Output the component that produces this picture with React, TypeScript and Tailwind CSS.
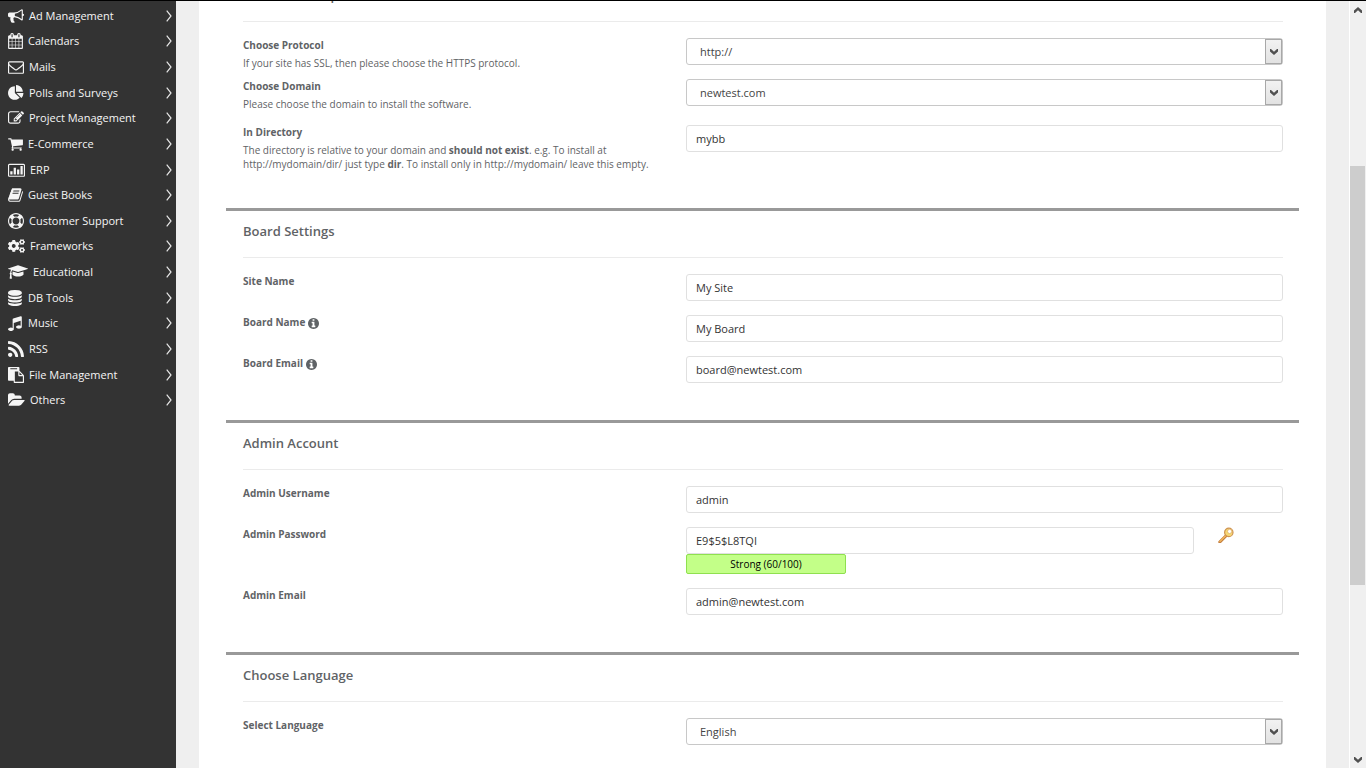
import type { ReactNode } from "react";
import { FaCogs } from "react-icons/fa";

type MenuItem = {
  label: string;
  box: string;
  width: string;
  path?: string;
};

const MENU: MenuItem[] = [
  {
    label: "Ad Management",
    box: "0 0 1792 1792",
    width: "w-4",
    path: "M1664 640q53 0 90.5 37.5t37.5 90.5-37.5 90.5-90.5 37.5v384q0 52-38 90t-90 38q-417-347-812-380-58 19-91 66t-31 100.5 40 92.5q-20 33-23 65.5t6 58 33.5 55 48 50 61.5 50.5q-29 58-111.5 83t-168.5 11.5-132-55.5q-7-23-29.5-87.5t-32-94.5-23-89-15-101 3.5-98.5 22-110.5h-122q-66 0-113-47t-47-113v-192q0-66 47-113t113-47h480q435 0 896-384 52 0 90 38t38 90v384zm-128 604v-954q-394 302-768 343v270q377 42 768 341z",
  },
  {
    label: "Calendars",
    box: "64 0 1664 1792",
    width: "w-[15px]",
    path: "M192 1664h288v-288h-288v288zm352 0h320v-288h-320v288zm-352-352h288v-320h-288v320zm352 0h320v-320h-320v320zm-352-384h288v-288h-288v288zm736 736h320v-288h-320v288zm-384-736h320v-288h-320v288zm768 736h288v-288h-288v288zm-384-352h320v-320h-320v320zm-352-864v-288q0-13-9.5-22.5t-22.5-9.5h-64q-13 0-22.5 9.5t-9.5 22.5v288q0 13 9.5 22.5t22.5 9.5h64q13 0 22.5-9.5t9.5-22.5zm736 864h288v-320h-288v320zm-384-384h320v-288h-320v288zm384 0h288v-288h-288v288zm32-480v-288q0-13-9.5-22.5t-22.5-9.5h-64q-13 0-22.5 9.5t-9.5 22.5v288q0 13 9.5 22.5t22.5 9.5h64q13 0 22.5-9.5t9.5-22.5zm384-64v1280q0 52-38 90t-90 38h-1408q-52 0-90-38t-38-90v-1280q0-52 38-90t90-38h128v-96q0-66 47-113t113-47h64q66 0 113 47t47 113v96h384v-96q0-66 47-113t113-47h64q66 0 113 47t47 113v96h128q52 0 90 38t38 90z",
  },
  {
    label: "Mails",
    box: "0 0 1792 1792",
    width: "w-4",
    path: "M1664 1504v-768q-32 36-69 66-268 206-426 338-51 43-83 67t-86.5 48.5-102.5 24.5h-2q-48 0-102.5-24.5t-86.5-48.5-83-67q-158-132-426-338-37-30-69-66v768q0 13 9.5 22.5t22.5 9.5h1472q13 0 22.5-9.5t9.5-22.5zm0-1051v-24.5l-.5-13-3-12.5-5.5-9-9-7.5-14-2.5h-1472q-13 0-22.5 9.5t-9.5 22.5q0 168 147 284 193 152 401 317 6 5 35 29.5t46 37.5 44.5 31.5 50.5 27.5 43 9h2q20 0 43-9t50.5-27.5 44.5-31.5 46-37.5 35-29.5q208-165 401-317 54-43 100.5-115.5t46.5-131.5zm128-37v1088q0 66-47 113t-113 47h-1472q-66 0-113-47t-47-113v-1088q0-66 47-113t113-47h1472q66 0 113 47t47 113z",
  },
  {
    label: "Polls and Surveys",
    box: "0 0 1792 1792",
    width: "w-4",
    path: "M768 890l546 546q-106 108-247.5 168t-298.5 60q-209 0-385.5-103t-279.5-279.5-103-385.5 103-385.5 279.5-279.5 385.5-103v762zm187 6h773q0 157-60 298.5t-168 247.5zm709-128h-768v-768q209 0 385.5 103t279.5 279.5 103 385.5z",
  },
  {
    label: "Project Management",
    box: "0 0 1792 1792",
    width: "w-4",
    path: "M888 1184l116-116-152-152-116 116v56h96v96h56zm440-720q-16-16-33 1l-350 350q-17 17-1 33t33-1l350-350q17-17 1-33zm80 594v190q0 119-84.5 203.5t-203.5 84.5h-832q-119 0-203.5-84.5t-84.5-203.5v-832q0-119 84.5-203.5t203.5-84.5h832q63 0 117 25 15 7 18 23 3 17-9 29l-49 49q-14 14-32 8-23-6-45-6h-832q-66 0-113 47t-47 113v832q0 66 47 113t113 47h832q66 0 113-47t47-113v-126q0-13 9-22l64-64q15-15 35-7t20 29zm-96-738l288 288-672 672h-288v-288zm444 132l-92 92-288-288 92-92q28-28 68-28t68 28l152 152q28 28 28 68t-28 68z",
  },
  {
    label: "E-Commerce",
    box: "64 0 1664 1792",
    width: "w-[15px]",
    path: "M704 1536q0 52-38 90t-90 38-90-38-38-90 38-90 90-38 90 38 38 90zm896 0q0 52-38 90t-90 38-90-38-38-90 38-90 90-38 90 38 38 90zm128-1088v512q0 24-16.5 42.5t-40.5 21.5l-1044 122q13 60 13 70 0 16-24 64h920q26 0 45 19t19 45-19 45-45 19h-1024q-26 0-45-19t-19-45q0-11 8-31.5t16-36 21.5-40 15.5-29.5l-177-823h-204q-26 0-45-19t-19-45 19-45 45-19h256q16 0 28.5 6.5t19.5 15.5 13 24.5 8 26 5.5 29.5 4.5 26h1201q26 0 45 19t19 45z",
  },
  {
    label: "ERP",
    box: "0 0 1920 1792",
    width: "w-[17px]",
    path: "M160 192h1600q66 0 113 47t47 113v1152q0 66-47 113t-113 47h-1600q-66 0-113-47t-47-113v-1152q0-66 47-113t113-47zm0 128q-32 0-32 32v1152q0 32 32 32h1600q32 0 32-32v-1152q0-32-32-32zM256 1024h256v384h-256zM640 640h256v768h-256zM1024 832h256v576h-256zM1408 448h256v960h-256z",
  },
  {
    label: "Guest Books",
    box: "64 0 1664 1792",
    width: "w-[15px]",
    path: "M1703 478q40 57 18 129l-275 906q-19 64-76.5 107.5t-122.5 43.5h-923q-77 0-148.5-53.5t-99.5-131.5q-24-67-2-127 0-4 3-27t4-37q1-8-3-21.5t-3-19.5q2-11 8-21t16.5-23.5 16.5-23.5q23-38 45-91.5t30-91.5q3-10 .5-30t-.5-28q3-11 17-28t17-23q21-36 42-92t25-90q1-9-2.5-32t.5-28q4-13 22-30.5t22-22.5q19-26 42.5-84.5t27.5-96.5q1-8-3-25.5t-2-26.5q2-8 9-18t18-23 17-21q8-12 16.5-30.5t15-35 16-36 19.5-32 26.5-23.5 36-11.5 47.5 5.5l-1 3q38-9 51-9h761q74 0 114 56t18 130l-274 906q-36 119-71.5 153.5t-128.5 34.5h-869q-27 0-38 15-11 16-1 43 24 70 144 70h923q29 0 56-15.5t35-41.5l300-987q7-22 5-57 38 15 59 43zm-1064 2q-4 13 2 22.5t20 9.5h608q13 0 25.5-9.5t16.5-22.5l21-64q4-13-2-22.5t-20-9.5h-608q-13 0-25.5 9.5t-16.5 22.5zm-83 256q-4 13 2 22.5t20 9.5h608q13 0 25.5-9.5t16.5-22.5l21-64q4-13-2-22.5t-20-9.5h-608q-13 0-25.5 9.5t-16.5 22.5z",
  },
  {
    label: "Customer Support",
    box: "0 0 1792 1792",
    width: "w-4",
    path: "M896 0q182 0 348 71t286 191 191 286 71 348-71 348-191 286-286 191-348 71-348-71-286-191-191-286-71-348 71-348 191-286 286-191 348-71zm0 128q-190 0-361 90l194 194q82-28 167-28t167 28l194-194q-171-90-361-90zm-678 1129l194-194q-28-82-28-167t28-167l-194-194q-90 171-90 361t90 361zm678 407q190 0 361-90l-194-194q-82 28-167 28t-167-28l-194 194q171 90 361 90zm0-384q159 0 271.5-112.5t112.5-271.5-112.5-271.5-271.5-112.5-271.5 112.5-112.5 271.5 112.5 271.5 271.5 112.5zm484-217l194 194q90-171 90-361t-90-361l-194 194q28 82 28 167t-28 167z",
  },
  { label: "Frameworks", box: "", width: "w-[17px]" },
  {
    label: "Educational",
    box: "0 0 2304 1792",
    width: "w-5",
    path: "M1774 836l18 316q4 69-82 128t-235 93.5-323 34.5-323-34.5-235-93.5-82-128l18-316 574 181q22 7 48 7t48-7zm530-324q0 23-22 31l-1120 352q-4 1-10 1t-10-1l-652-206q-43 34-71 111.5t-34 178.5q63 36 63 109 0 69-58 107l58 433q2 14-8 25-9 11-24 11h-192q-15 0-24-11-10-11-8-25l58-433q-58-38-58-107 0-73 65-111 11-207 98-330l-333-104q-22-8-22-31t22-31l1120-352q4-1 10-1t10 1l1120 352q22 8 22 31z",
  },
  {
    label: "DB Tools",
    box: "128 0 1664 1792",
    width: "w-[15px]",
    path: "M896 768q237 0 443-43t325-127v170q0 69-103 128t-280 93.5-385 34.5-385-34.5-280-93.5-103-128v-170q119 84 325 127t443 43zm0 768q237 0 443-43t325-127v170q0 69-103 128t-280 93.5-385 34.5-385-34.5-280-93.5-103-128v-170q119 84 325 127t443 43zm0-384q237 0 443-43t325-127v170q0 69-103 128t-280 93.5-385 34.5-385-34.5-280-93.5-103-128v-170q119 84 325 127t443 43zm0-1152q208 0 385 34.5t280 93.5 103 128v128q0 69-103 128t-280 93.5-385 34.5-385-34.5-280-93.5-103-128v-128q0-69 103-128t280-93.5 385-34.5z",
  },
  {
    label: "Music",
    box: "128 0 1664 1792",
    width: "w-[15px]",
    path: "M1664 224v1120q0 50-34 89t-86 60.5-103.5 32-96.5 10.5-96.5-10.5-103.5-32-86-60.5-34-89 34-89 86-60.5 103.5-32 96.5-10.5q105 0 192 39v-537l-768 237v709q0 50-34 89t-86 60.5-103.5 32-96.5 10.5-96.5-10.5-103.5-32-86-60.5-34-89 34-89 86-60.5 103.5-32 96.5-10.5q105 0 192 39v-967q0-31 19-56.5t49-35.5l832-256q12-4 28-4 40 0 68 28t28 68z",
  },
  {
    label: "RSS",
    box: "192 128 1408 1408",
    width: "w-4",
    path: "M576 1344q0 80-56 136t-136 56-136-56-56-136 56-136 136-56 136 56 56 136zm512 123q2 28-17 48-18 21-47 21h-135q-25 0-43-16.5t-20-41.5q-22-229-184.5-391.5t-391.5-184.5q-25-2-41.5-20t-16.5-43v-135q0-29 21-47 17-17 43-17h5q160 13 306 80.5t259 181.5q114 113 181.5 259t80.5 306zm512 2q2 27-18 47-18 20-46 20h-143q-26 0-44.5-17.5t-19.5-42.5q-12-215-101-408.5t-231.5-336-336-231.5-408.5-102q-25-1-42.5-19.5t-17.5-43.5v-143q0-28 20-46 18-18 44-18h3q262 13 501.5 120t425.5 294q187 186 294 425.5t120 501.5z",
  },
  {
    label: "File Management",
    box: "0 0 1792 1792",
    width: "w-4",
    path: "M768 1664h896v-640h-416q-40 0-68-28t-28-68v-416h-384v1152zm256-1440v-64q0-13-9.5-22.5t-22.5-9.5h-704q-13 0-22.5 9.5t-9.5 22.5v64q0 13 9.5 22.5t22.5 9.5h704q13 0 22.5-9.5t9.5-22.5zm256 672h299l-299-299v299zm512 128v672q0 40-28 68t-68 28h-960q-40 0-68-28t-28-68v-160h-544q-40 0-68-28t-28-68v-1344q0-40 28-68t68-28h1088q40 0 68 28t28 68v328q21 13 36 28l408 408q28 28 48 76t20 88z",
  },
  {
    label: "Others",
    box: "0 0 1920 1792",
    width: "w-[17px]",
    path: "M1879 952q0 31-31 66l-336 396q-43 51-120.5 86.5t-143.5 35.5h-1088q-34 0-60.5-13t-26.5-43q0-31 31-66l336-396q43-51 120.5-86.5t143.5-35.5h1088q34 0 60.5 13t26.5 43zm-343-344v160h-832q-94 0-197 47.5t-164 119.5l-337 396-5 6q0-4-.5-12.5t-.5-12.5v-960q0-92 66-158t158-66h320q92 0 158 66t66 158v32h544q92 0 158 66t66 158z",
  },
];

function InfoIcon() {
  return (
    <svg viewBox="128 128 1536 1536" className="w-[11px] h-[11px] mt-[2px]" fill="currentColor">
      <path d="M1152 1376v-160q0-14-9-23t-23-9h-96v-512q0-14-9-23t-23-9h-320q-14 0-23 9t-9 23v160q0 14 9 23t23 9h96v320h-96q-14 0-23 9t-9 23v160q0 14 9 23t23 9h448q14 0 23-9t9-23zm-128-896v-160q0-14-9-23t-23-9h-192q-14 0-23 9t-9 23v160q0 14 9 23t23 9h192q14 0 23-9t9-23zm640 416q0 209-103 385.5t-279.5 279.5-385.5 103-385.5-103-279.5-279.5-103-385.5 103-385.5 279.5-279.5 385.5-103 385.5 103 279.5 279.5 103 385.5z" />
    </svg>
  );
}

function KeyIcon() {
  return (
    <svg viewBox="0 0 16 16" className="w-4 h-4">
      <path d="M1.8 15 8.8 8" stroke="#c07a3a" strokeWidth="3" strokeLinecap="round" />
      <path d="M2 14.4 8.8 7.6" stroke="#eeb25c" strokeWidth="1.5" strokeLinecap="round" />
      <circle cx="10.8" cy="5.4" r="4.2" fill="#f6d774" stroke="#cf9350" strokeWidth="1.2" />
      <circle cx="11.6" cy="4.4" r="2.1" fill="#fff" stroke="#e0b36a" strokeWidth="0.8" />
    </svg>
  );
}

function ArrowIcon({ up = false }: { up?: boolean }) {
  return (
    <svg viewBox="0 0 8 6" className={up ? "w-2 h-[6px] rotate-180" : "w-2 h-[6px]"}>
      <path d="M0 0H1L4 2.8 7 0H8V2.6L4 6 0 2.6Z" fill="#505050" />
    </svg>
  );
}

function Sidebar() {
  return (
    <aside className="w-44 shrink-0 bg-[#333333] pt-[2px]">
      <nav className="grid h-[410px] auto-rows-fr">
        {MENU.map((item) => (
          <a
            key={item.label}
            href="#"
            className="flex items-center pl-2 pr-1 text-[11px] leading-4 text-[#f5f5f5]"
          >
            {item.path ? (
              <svg viewBox={item.box} className={`${item.width} h-4 shrink-0`} fill="currentColor">
                <path fillRule={item.label === "ERP" ? "evenodd" : "nonzero"} d={item.path} />
              </svg>
            ) : (
              <FaCogs className={`${item.width} h-4 shrink-0`} />
            )}
            <span className="ml-[5px] flex-1">{item.label}</span>
            <svg viewBox="0 0 6 12" className="w-[6px] h-3" fill="none">
              <path d="M0.7 0.7 5 6 0.7 11.3" stroke="#e6e6e6" strokeWidth="1.2" />
            </svg>
          </a>
        ))}
      </nav>
    </aside>
  );
}

function Section({ title, children }: { title: string; children: ReactNode }) {
  return (
    <section className="border-t-[3px] border-[#999999] pb-[37px]">
      <div className="pl-[17px] pr-4">
        <h2 className="h-[47px] border-b border-[#ebebeb] pt-[11px] text-[13px] leading-[18px] font-semibold text-[#5f6366]">
          {title}
        </h2>
        <div className="pt-4">{children}</div>
      </div>
    </section>
  );
}

function Row({
  id,
  label,
  info = false,
  note,
  gap = "mb-[14px]",
  children,
}: {
  id: string;
  label: string;
  info?: boolean;
  note?: ReactNode;
  gap?: string;
  children: ReactNode;
}) {
  return (
    <div className={`grid grid-cols-[443fr_597fr] items-start last:mb-0 ${gap}`}>
      <div className="text-[#5f6366]">
        <div className="flex h-[15px] items-center gap-[3px]">
          <label htmlFor={id} className="text-[10px] leading-[15px] font-bold">
            {label}
          </label>
          {info && <InfoIcon />}
        </div>
        {note && <p className="mt-[3px] text-[10px] leading-[14px]">{note}</p>}
      </div>
      {children}
    </div>
  );
}

function TextBox({ id, value }: { id: string; value: string }) {
  return (
    <input
      id={id}
      type="text"
      defaultValue={value}
      className="block h-[27px] w-full rounded-[3px] border border-[#e0e0e0] bg-white px-[9px] text-[11px] text-[#333333]"
    />
  );
}

function SelectBox({ id, options }: { id: string; options: string[] }) {
  return (
    <div className="relative">
      <select
        id={id}
        className="block h-[27px] w-full appearance-none rounded-[3px] border border-[#c8c8c8] bg-white pt-[2px] pl-[13px] pr-6 text-[11px] text-[#444444]"
      >
        {options.map((option) => (
          <option key={option}>{option}</option>
        ))}
      </select>
      <span className="pointer-events-none absolute inset-y-px right-px flex w-[17px] items-center justify-center border border-[#a8a8a8] bg-gradient-to-b from-[#f2f2f2] to-[#e2e2e2]">
        <ArrowIcon />
      </span>
    </div>
  );
}

export default function App() {
  return (
    <div className="flex h-screen overflow-hidden border-t border-black bg-[#efefef] font-['Open_Sans',sans-serif]">
      <Sidebar />

      <main className="min-w-0 flex-1 overflow-hidden px-[23px]">
        <div className="-mt-[29px] min-h-full bg-white px-[27px]">
          <Section title="Software Setup">
            <Row
              id="protocol"
              label="Choose Protocol"
              note="If your site has SSL, then please choose the HTTPS protocol."
              gap="mb-[9px]"
            >
              <SelectBox id="protocol" options={["http://", "https://"]} />
            </Row>
            <Row
              id="domain"
              label="Choose Domain"
              note="Please choose the domain to install the software."
            >
              <SelectBox id="domain" options={["newtest.com"]} />
            </Row>
            <Row
              id="directory"
              label="In Directory"
              note={
                <>
                  The directory is relative to your domain and <b>should not exist</b>. e.g. To install at
                  <br />
                  http://mydomain/dir/ just type <b>dir</b>. To install only in http://mydomain/ leave this empty.
                </>
              }
            >
              <TextBox id="directory" value="mybb" />
            </Row>
          </Section>

          <Section title="Board Settings">
            <Row id="site-name" label="Site Name">
              <TextBox id="site-name" value="My Site" />
            </Row>
            <Row id="board-name" label="Board Name" info>
              <TextBox id="board-name" value="My Board" />
            </Row>
            <Row id="board-email" label="Board Email" info>
              <TextBox id="board-email" value="board@newtest.com" />
            </Row>
          </Section>

          <Section title="Admin Account">
            <Row id="admin-username" label="Admin Username">
              <TextBox id="admin-username" value="admin" />
            </Row>
            <Row id="admin-password" label="Admin Password">
              <div className="grid grid-cols-[508fr_89fr]">
                <div>
                  <TextBox id="admin-password" value="E9$5$L8TQI" />
                  <div className="h-5 w-40 rounded-xs border border-[#8fe04f] bg-[#c3ff88] text-center text-[10px] leading-[18px] text-black">
                    Strong (60/100)
                  </div>
                </div>
                <button type="button" aria-label="Generate a random password" className="ml-6 h-4 w-4">
                  <KeyIcon />
                </button>
              </div>
            </Row>
            <Row id="admin-email" label="Admin Email">
              <TextBox id="admin-email" value="admin@newtest.com" />
            </Row>
          </Section>

          <Section title="Choose Language">
            <Row id="language" label="Select Language">
              <SelectBox id="language" options={["English"]} />
            </Row>
          </Section>
        </div>
      </main>

      {/* Window scrollbar */}
      <div className="flex w-[17px] shrink-0 flex-col items-center border-l border-white bg-[#f0f0f0]">
        <div className="flex h-[17px] items-center justify-center">
          <ArrowIcon up />
        </div>
        <div className="flex w-full flex-1 flex-col pr-px">
          <div className="flex-[148]" />
          <div className="flex-[419] bg-[#cdcdcd]" />
          <div className="flex-[166]" />
        </div>
        <div className="flex h-[17px] items-center justify-center">
          <ArrowIcon />
        </div>
      </div>
    </div>
  );
}
